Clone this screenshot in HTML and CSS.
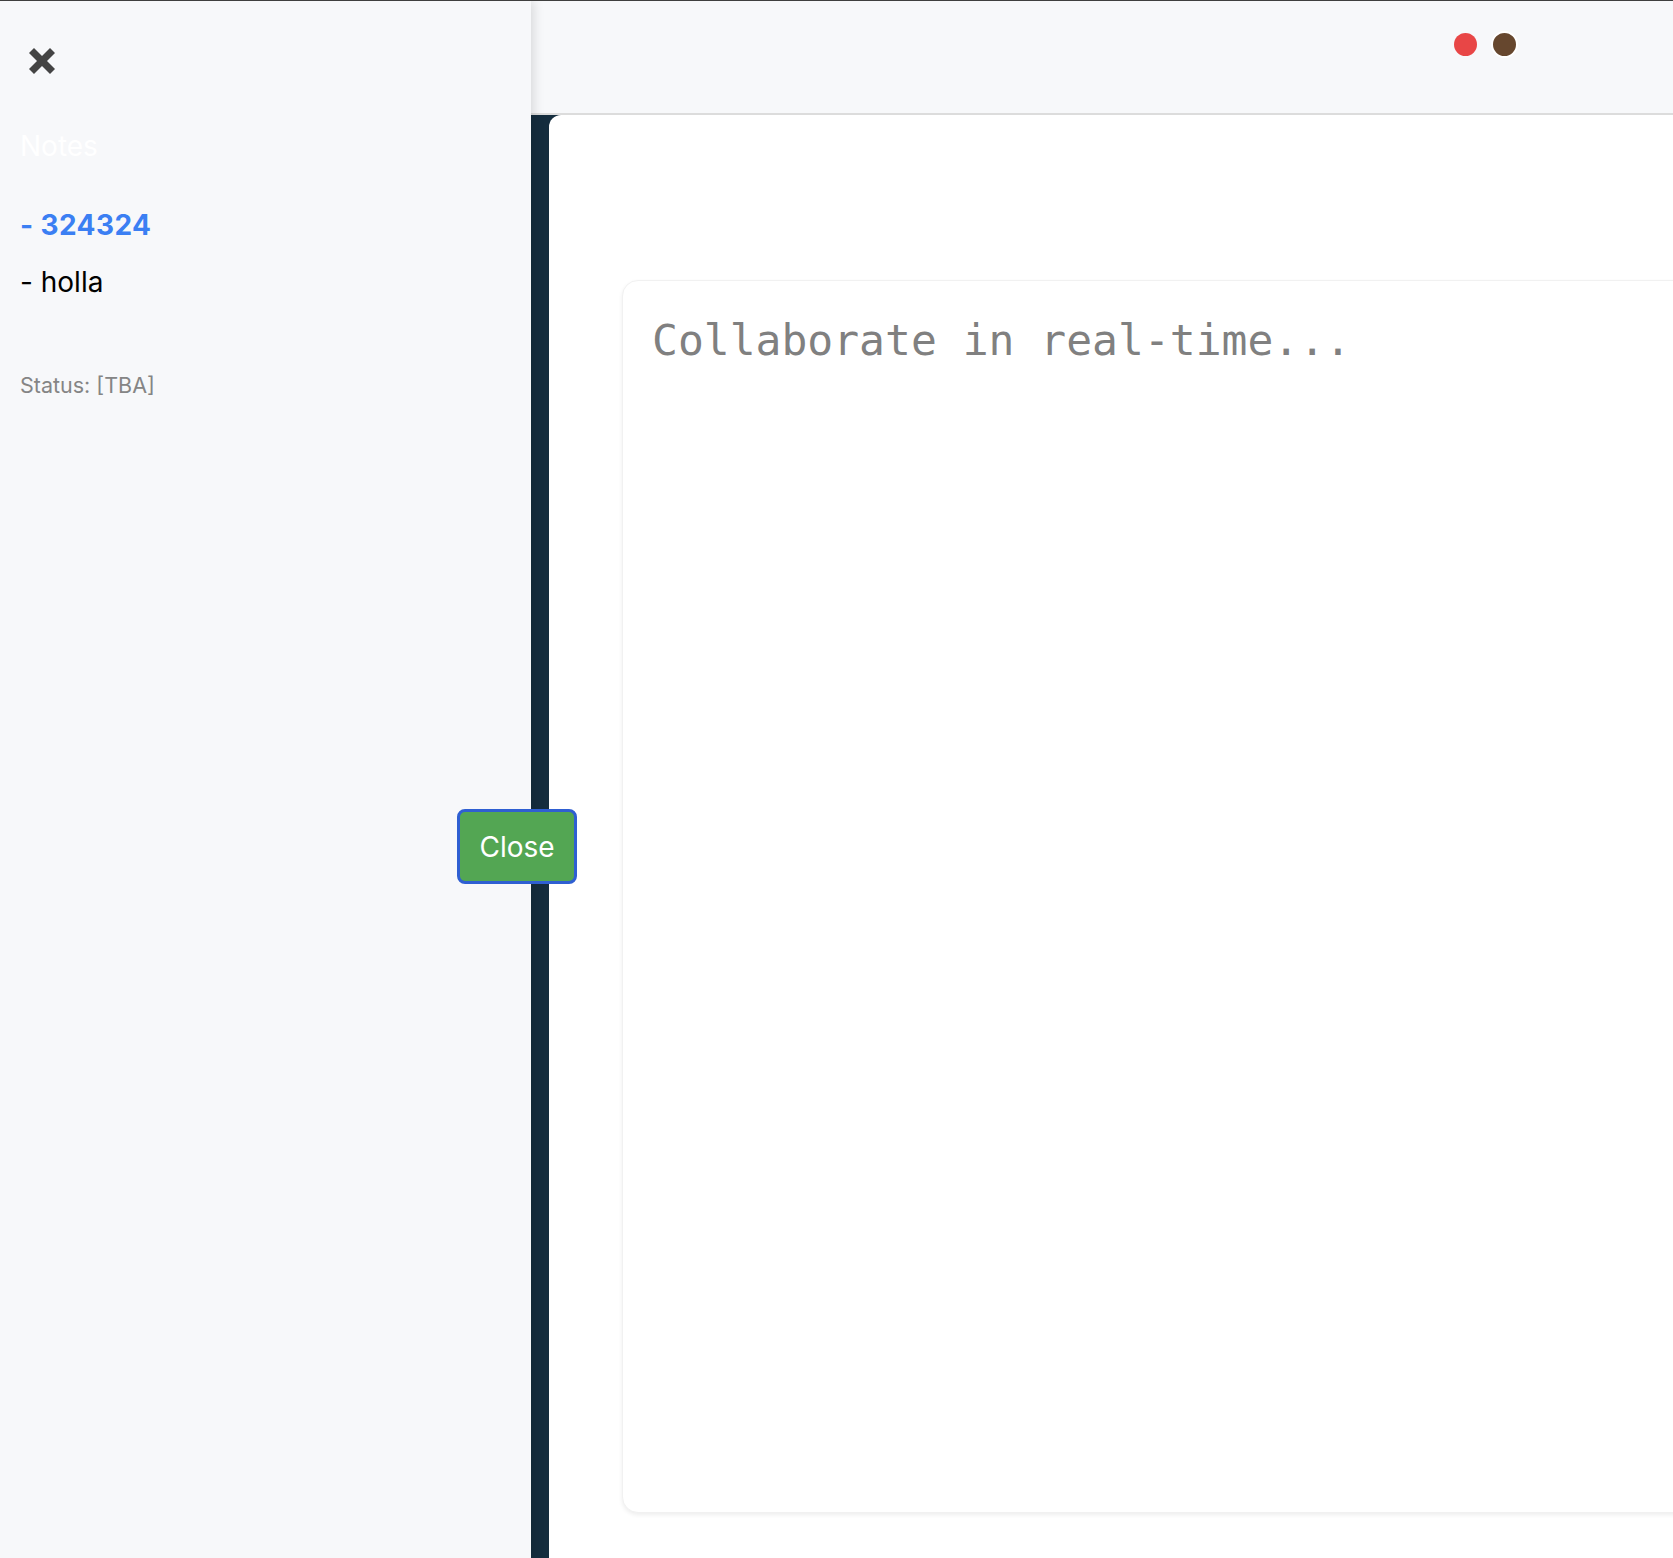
FILE: index.html
```html
<!DOCTYPE html>
<html lang="en">
<head>
<meta charset="utf-8">
<title>Notes</title>
<link rel="stylesheet" href="styles.css">
</head>
<body>
<div class="app">
  <aside class="sidebar">
    <div class="close-icon" aria-label="Close">
      <svg width="28" height="28" viewBox="0 0 28 28">
        <line x1="3.5" y1="3.5" x2="24.5" y2="24.5" stroke="#444" stroke-width="7"/>
        <line x1="24.5" y1="3.5" x2="3.5" y2="24.5" stroke="#444" stroke-width="7"/>
      </svg>
    </div>
    <h2 class="notes-title">Notes</h2>
    <div class="note note-active">- 324324</div>
    <div class="note">- holla</div>
    <div class="status">Status: [TBA]</div>
    <button class="close-btn">Close</button>
  </aside>
  <main class="main">
    <header class="topbar">
      <span class="dot dot-red"></span>
      <span class="dot dot-brown"></span>
    </header>
    <div class="workspace">
      <div class="panel">
        <div class="editor">
          <div class="placeholder">Collaborate in real-time...</div>
        </div>
      </div>
    </div>
  </main>
</div>
</body>
</html>
```
FILE: styles.css
```css
* { box-sizing: border-box; }
html, body { margin: 0; padding: 0; }
body {
  width: 1673px;
  height: 1558px;
  overflow: hidden;
  border-top: 1px solid #3f3f3f;
  background: #152d3e;
  font-family: Inter, "Noto Sans", sans-serif;
}
.app {
  display: flex;
  height: 1557px;
}
.sidebar {
  position: relative;
  z-index: 2;
  flex: 0 0 531px;
  background: #f7f8fa;
  padding: 0 20px;
  box-shadow: 3px 0 10px rgba(0,0,0,0.12);
}
.close-icon {
  width: 28px;
  height: 28px;
  margin: 46px 0 0 8px;
}
.close-icon svg { display: block; }
.notes-title {
  margin: 54px 0 0 0;
  font-size: 28px;
  line-height: 34px;
  font-weight: 400;
  color: #ffffff;
}
.note {
  font-size: 28px;
  line-height: 34px;
  color: #000;
  margin-top: 23px;
}
.note-active {
  margin-top: 45px;
  font-size: 28px;
  letter-spacing: 0.4px;
  font-weight: 700;
  color: #3b7ff3;
}
.status {
  margin-top: 73px;
  font-size: 21.5px;
  line-height: 26px;
  color: #858585;
}
.close-btn {
  position: absolute;
  left: 457px;
  top: 808px;
  width: 120px;
  height: 75px;
  background: #53a653;
  border: 3px solid #2f5fd2;
  border-radius: 8px;
  color: #fff;
  font-family: Inter, "Noto Sans", sans-serif;
  font-size: 28px;
  padding: 0;
}
.main {
  flex: 1 1 auto;
  display: flex;
  flex-direction: column;
  min-width: 0;
}
.topbar {
  height: 114px;
  background: #f7f8fa;
  border-bottom: 2px solid #dcdcdc;
  display: flex;
  justify-content: flex-end;
  align-items: flex-start;
  padding: 30px 155px 0 0;
  gap: 14px;
}
.dot {
  border-radius: 50%;
}
.dot-red {
  width: 23px;
  height: 23px;
  margin-top: 2px;
  background: #e84646;
}
.dot-brown {
  width: 27px;
  height: 27px;
  background: #66472e;
  border: 2px solid #ffffff;
}
.workspace {
  flex: 1 1 auto;
  background: #152d3e;
  padding-left: 18px;
  display: flex;
}
.panel {
  flex: 1 1 auto;
  background: #ffffff;
  border-top-left-radius: 12px;
  padding: 165px 0 0 73px;
  overflow: hidden;
}
.editor {
  width: 1120px;
  height: 1233px;
  background: #fff;
  border: 1px solid #f1f1f1;
  border-radius: 16px;
  box-shadow: 0 2px 4px rgba(0,0,0,0.07);
  padding: 33px 0 0 29px;
}
.placeholder {
  font-family: "DejaVu Sans Mono", monospace;
  font-size: 43px;
  line-height: 52px;
  color: #808080;
}
```
